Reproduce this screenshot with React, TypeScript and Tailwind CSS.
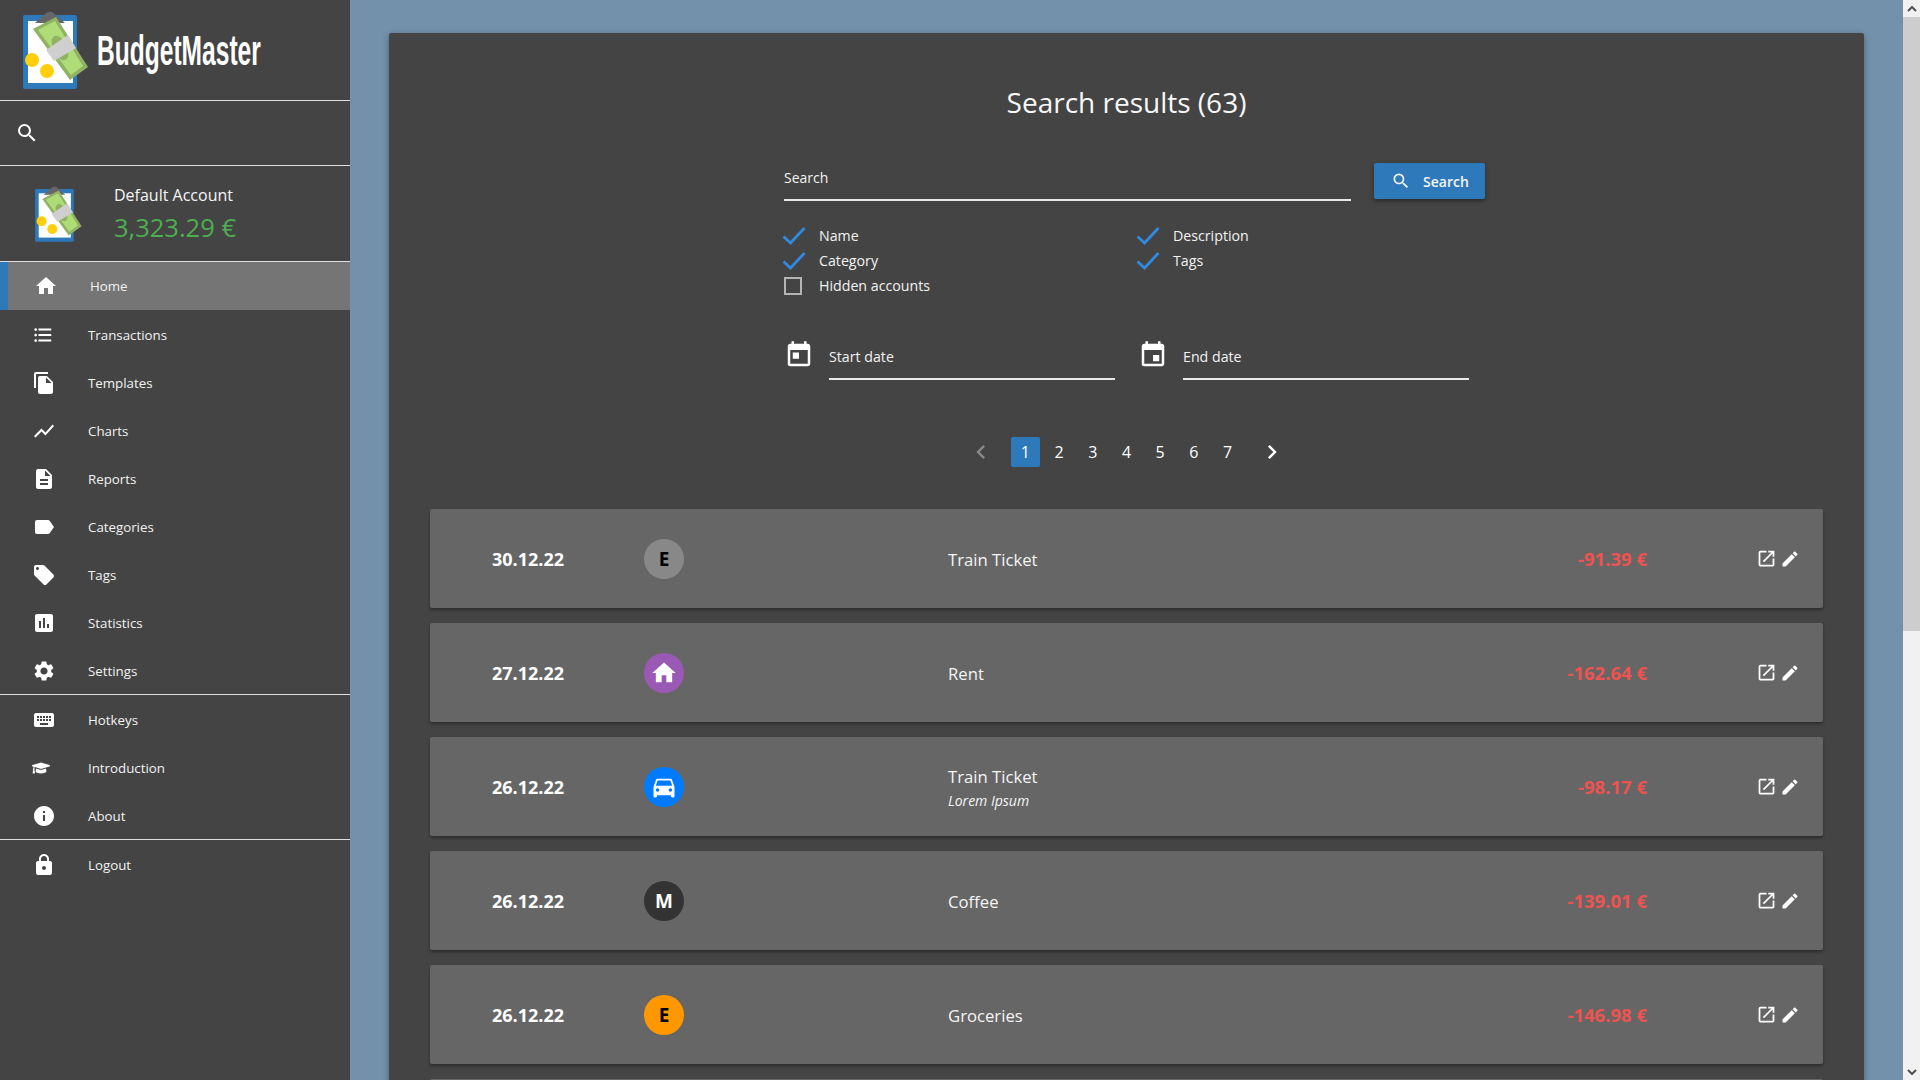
import React from "react";
import {
  MdHome, MdFormatListBulleted, MdFileCopy, MdShowChart, MdDescription, MdLabel, MdLocalOffer,
  MdAssessment, MdSettings, MdKeyboard, MdInfo, MdLock, MdSearch, MdEvent, MdToday, MdOpenInNew,
  MdEdit, MdDirectionsCar, MdChevronLeft, MdChevronRight,
} from "react-icons/md";
import { FaGraduationCap } from "react-icons/fa";

function Logo({ className }: { className: string }) {
  return (
    <svg viewBox="20 8 70 84" className={className}>
      <rect x="23" y="15" width="54" height="74" rx="2" fill="#2e79b9" />
      <rect x="28" y="21" width="45" height="62" fill="#fff" />
      <path d="M35 23 L44 15 Q50 8 56 15 L65 23 Z" fill="#666" />
      <path d="M33 29 L56 17 L88 67 L70 80 Z" fill="#8fb263" />
      <path d="M38 30 L55 21 L83 66 L71 75 Z" fill="#aedd78" />
      <ellipse cx="60" cy="48" rx="7" ry="13" transform="rotate(-25 60 48)" fill="#8fb263" />
      <path d="M46 50 L68 35 L76 48 L54 61 Z" fill="#cfcfcf" />
      <circle cx="32" cy="60" r="7" fill="#ffcf0d" />
      <circle cx="47" cy="71" r="7" fill="#ffcf0d" />
    </svg>
  );
}

const nav1: [React.ComponentType<{ className?: string }>, string, string][] = [
  [MdFormatListBulleted, "Transactions", "ml-[-2px] text-[22px]"],
  [MdFileCopy, "Templates", "text-[24px]"],
  [MdShowChart, "Charts", "text-[24px]"],
  [MdDescription, "Reports", "text-[24px]"],
  [MdLabel, "Categories", "text-[24px]"],
  [MdLocalOffer, "Tags", "text-[24px]"],
  [MdAssessment, "Statistics", "text-[24px]"],
  [MdSettings, "Settings", "text-[24px]"],
];
const nav2: typeof nav1 = [
  [MdKeyboard, "Hotkeys", "text-[24px]"],
  [FaGraduationCap, "Introduction", "ml-[-6px] text-[18px]"],
  [MdInfo, "About", "text-[24px]"],
];

function NavItem({ item }: { item: (typeof nav1)[number] }) {
  const [Icon, label, size] = item;
  return (
    <div className="flex h-12 items-center pl-[32px]">
      <div className="flex w-[24px] justify-center text-white">
        <Icon className={size} />
      </div>
      <span className="ml-[32px] pt-[2px] text-[13.3px] font-medium text-[#f2f2f2]">{label}</span>
    </div>
  );
}

function Check({ label, checked = true }: { label: string; checked?: boolean }) {
  return (
    <div className="flex h-[25px] items-center">
      <div className="flex w-[35px] items-center">
        {checked ? (
          <svg viewBox="0 0 24 18" className="ml-[-2px] h-[18px] w-[24px]">
            <path d="M1.5 9.5 L8.5 16 L22.5 1" fill="none" stroke="#2f8be0" strokeWidth="2.8" />
          </svg>
        ) : (
          <div className="h-[18px] w-[18px] border-2 border-[#b5b5b5]" />
        )}
      </div>
      <span className="text-[14.2px] text-[#f2f2f2]">{label}</span>
    </div>
  );
}

function DateField({ label, Icon }: { label: string; Icon: React.ComponentType<{ className?: string }> }) {
  return (
    <div className="flex h-[40px] items-start">
      <div className="flex w-[45px] justify-start text-white">
        <Icon className="text-[30px]" />
      </div>
      <div className="h-[40px] w-[286px] border-b-2 border-[#e8e8e8] pt-[7px] text-[14.2px] leading-[20px] text-[#f2f2f2]">
        {label}
      </div>
    </div>
  );
}

type Row = {
  date: string;
  circle: string;
  badge: React.ReactNode;
  name: string;
  desc?: string;
  amount: string;
};

const rows: Row[] = [
  { date: "30.12.22", circle: "bg-[#888888]", badge: <span className="pt-[2px] text-[19px] font-bold text-black">E</span>, name: "Train Ticket", amount: "-91.39 €" },
  { date: "27.12.22", circle: "bg-[#9b59b6]", badge: <MdHome className="text-[28px] text-white" />, name: "Rent", amount: "-162.64 €" },
  { date: "26.12.22", circle: "bg-[#007bff]", badge: <MdDirectionsCar className="text-[28px] text-white" />, name: "Train Ticket", desc: "Lorem Ipsum", amount: "-98.17 €" },
  { date: "26.12.22", circle: "bg-[#333333]", badge: <span className="pt-[2px] text-[19px] font-bold text-white">M</span>, name: "Coffee", amount: "-139.01 €" },
  { date: "26.12.22", circle: "bg-[#ff9800]", badge: <span className="pt-[2px] text-[19px] font-bold text-black">E</span>, name: "Groceries", amount: "-146.98 €" },
];

function TxRow({ r }: { r: Row }) {
  return (
    <div className="flex h-[99px] items-center rounded-[2px] bg-[#666666] shadow-[0_2px_3px_rgba(0,0,0,0.35)]">
      <div className="w-[214px] pl-[62px] pt-[2px] text-[18px] font-bold text-white">{r.date}</div>
      <div className={`flex h-[40px] w-[40px] items-center justify-center rounded-full ${r.circle}`}>{r.badge}</div>
      <div className="ml-[264px] w-[400px] pt-[2px]">
        <div className="text-[16.7px] leading-[26px] text-[#f5f5f5]">{r.name}</div>
        {r.desc ? <div className="mt-[1px] text-[14px] italic leading-[20px] text-[#f5f5f5]">{r.desc}</div> : null}
      </div>
      <div className="w-[299px] pt-[1px] text-right text-[18.5px] font-bold text-[#ef5350]">{r.amount}</div>
      <div className="ml-[109px] flex items-center text-white">
        <MdOpenInNew className="text-[21px]" />
        <MdEdit className="ml-[3px] text-[20px]" />
      </div>
    </div>
  );
}

export default function App() {
  return (
    <div className="flex h-screen w-full overflow-hidden font-['Open_Sans','Noto_Sans',sans-serif]">
      <aside className="w-[350px] shrink-0 overflow-hidden bg-[#444444]">
        <div className="flex h-[100px] items-center pl-[20px]">
          <Logo className="h-[84px] w-[70px] shrink-0" />
          <span className="ml-[7px] inline-block origin-left scale-x-[0.585] whitespace-nowrap font-['Liberation_Sans',sans-serif] text-[42px] font-bold text-white">
            BudgetMaster
          </span>
        </div>
        <div className="h-px bg-[#e0e0e0]" />
        <div className="flex h-[64px] items-center pl-[15px] text-white">
          <MdSearch className="text-[24px]" />
        </div>
        <div className="h-px bg-[#e0e0e0]" />
        <div className="flex h-[95px] items-center pl-[33px]">
          <Logo className="h-[60px] w-[50px] shrink-0" />
          <div className="ml-[31px]">
            <div className="text-[16px] leading-[22px] text-[#f5f5f5]">Default Account</div>
            <div className="mt-[5px] text-[25.5px] leading-[33px] text-[#4caf50]">3,323.29 €</div>
          </div>
        </div>
        <div className="h-px bg-[#e0e0e0]" />
        <div className="mb-px flex h-12 items-center border-l-[8px] border-[#2e79b9] bg-[#757575] pl-[26px]">
          <div className="flex w-[24px] justify-center text-white">
            <MdHome className="text-[26px]" />
          </div>
          <span className="ml-[32px] pt-[2px] text-[13.3px] font-medium text-[#f2f2f2]">Home</span>
        </div>
        {nav1.map((n) => (
          <NavItem key={n[1]} item={n} />
        ))}
        <div className="-mt-px mb-px h-px bg-[#e0e0e0]" />
        {nav2.map((n) => (
          <NavItem key={n[1]} item={n} />
        ))}
        <div className="-mt-px mb-px h-px bg-[#e0e0e0]" />
        <NavItem item={[MdLock, "Logout", "text-[24px]"]} />
      </aside>

      <main className="h-screen flex-1 overflow-hidden bg-[#7491ab] px-[39px] pt-[33px]">
        <div className="rounded-[2px] bg-[#444444] px-[41px] pb-[40px] shadow-[0_2px_6px_rgba(0,0,0,0.35)]">
          <h1 className="pt-[39px] text-center text-[28px] leading-[60px] text-[#f8f8f8]">Search results (63)</h1>

          <div className="ml-[354px] mt-[31px] w-[708px]">
            <div className="flex items-start">
              <div className="h-[38px] w-[567px] border-b-2 border-[#e8e8e8] pt-[5px] text-[14px] leading-[20px] text-[#f2f2f2]">Search</div>
              <button className="ml-[23px] flex h-[36px] w-[111px] items-center justify-center rounded-[2px] bg-[#2e79b9] pl-[1px] text-[14px] font-semibold text-[#f5f5f5] shadow-[0_2px_4px_rgba(0,0,0,0.4)]">
                <MdSearch className="mr-[12px] text-[20px]" />
                Search
              </button>
            </div>

            <div className="mt-[22px] grid grid-cols-[354px_354px]">
              <Check label="Name" />
              <Check label="Description" />
              <Check label="Category" />
              <Check label="Tags" />
              <Check label="Hidden accounts" checked={false} />
            </div>

            <div className="mt-[42px] grid grid-cols-[354px_354px]">
              <DateField label="Start date" Icon={MdToday} />
              <DateField label="End date" Icon={MdEvent} />
            </div>
          </div>

          <div className="mt-[57px] flex items-center justify-center">
            <MdChevronLeft className="mr-[16px] text-[28px] text-[#8a8a8a]" />
            <div className="flex items-center gap-[4.7px]">
              {[1, 2, 3, 4, 5, 6, 7].map((p) => (
                <div
                  key={p}
                  className={`flex h-[30px] w-[29px] items-center justify-center rounded-[2px] text-[16px] text-white ${p === 1 ? "bg-[#2e79b9]" : ""}`}
                >
                  {p}
                </div>
              ))}
            </div>
            <MdChevronRight className="ml-[16px] text-[28px] text-white" />
          </div>

          <div className="mt-[42px] flex flex-col gap-[15px]">
            {rows.map((r, i) => (
              <TxRow key={i} r={r} />
            ))}
            <div className="h-[99px] rounded-[2px] bg-[#666666]" />
          </div>
        </div>
      </main>

      <div className="flex h-screen w-[17px] shrink-0 flex-col bg-[#f1f1f1]">
        <div className="flex h-[17px] items-center justify-center">
          <svg viewBox="0 0 10 6" className="h-[6px] w-[10px]">
            <path d="M1 5 L5 1 L9 5" fill="none" stroke="#505050" strokeWidth="2" />
          </svg>
        </div>
        <div className="h-[614px] bg-[#cdcdcd]" />
        <div className="flex-1" />
        <div className="flex h-[17px] items-center justify-center">
          <svg viewBox="0 0 10 6" className="h-[6px] w-[10px]">
            <path d="M1 1 L5 5 L9 1" fill="none" stroke="#505050" strokeWidth="2" />
          </svg>
        </div>
      </div>
    </div>
  );
}
